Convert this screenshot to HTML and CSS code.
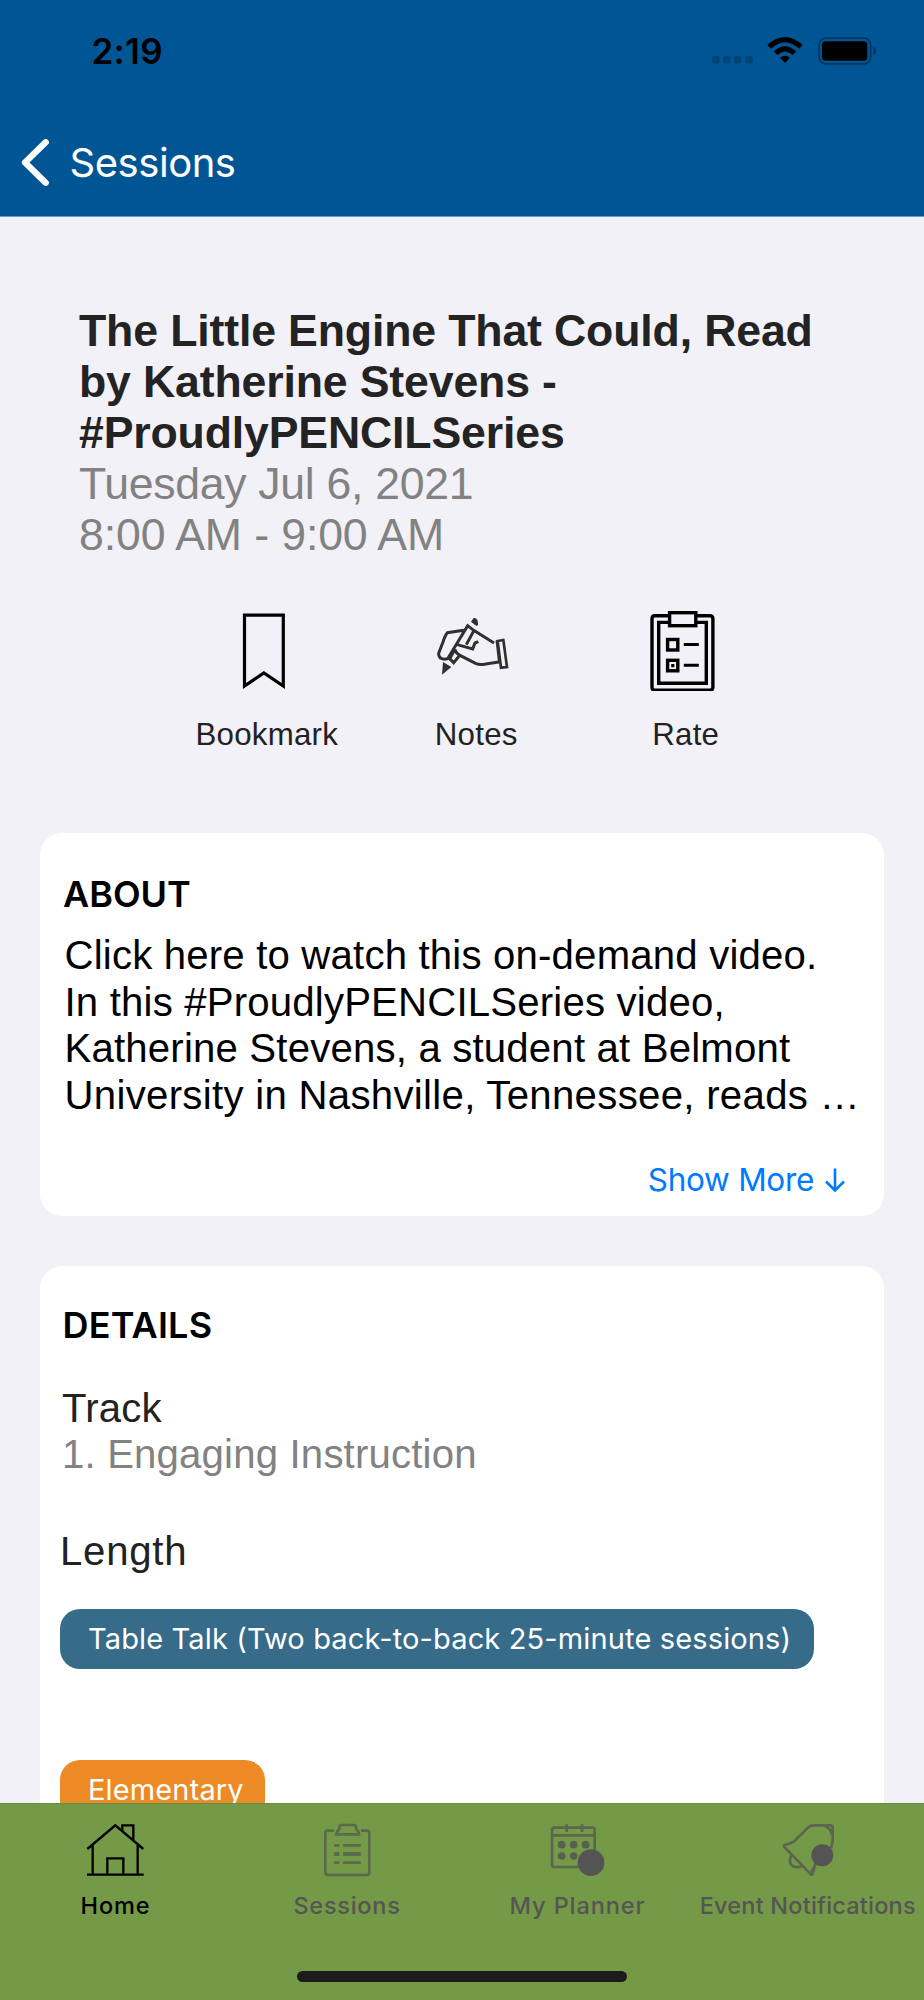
FILE: index.html
```
<!DOCTYPE html>
<html lang="en">
<head>
<meta charset="utf-8">
<title>Session</title>
<link rel="stylesheet" href="styles.css">
</head>
<body>
<div class="screen">
  <header class="header">
    <div class="status">
      <span class="time">2:19</span>
      <div class="status-icons">
        <svg class="cell" width="42" height="8" viewBox="0 0 42 8"><g fill="#004577"><rect x="0" width="7.5" height="7.5" rx="2"/><rect x="11" width="7.5" height="7.5" rx="2"/><rect x="22" width="7.5" height="7.5" rx="2"/><rect x="33.3" width="7.5" height="7.5" rx="2"/></g></svg>
        <svg class="wifi" width="36" height="27" viewBox="0 0 108 81"><path d="M1 24Q54-24 107 24L96 35Q54-4 12 35ZM20 43Q54 12 88 43L77 54Q54 33 31 54ZM39 62Q54 51 69 62L54 78Z"/></svg>
        <svg class="battery" width="59" height="28" viewBox="0 0 177 84"><rect x="3" y="3.500" width="155" height="77" rx="20" fill="none" stroke="#003560" stroke-width="5"/><rect x="12" y="13" width="136" height="58" rx="11"/><path d="M166 29C178 35 178 49 166 55Z" fill="#003560"/></svg>
      </div>
    </div>
    <div class="back">
      <svg width="28" height="47" viewBox="0 0 84 141"><path d="M74 10L12 70.500L74 131" fill="none" stroke="#fff" stroke-width="19" stroke-linecap="round" stroke-linejoin="round"/></svg>
      <span class="back-label">Sessions</span>
    </div>
  </header>
  <main class="content">
    <section class="intro">
      <h1 class="title">The Little Engine That Could, Read<br>by Katherine Stevens -<br>#ProudlyPENCILSeries</h1>
      <p class="when"><span class="date">Tuesday Jul 6, 2021</span><br>8:00 AM - 9:00 AM</p>
    </section>
    <section class="actions">
      <div class="action">
        <svg width="60" height="80" viewBox="0 0 60 80"><path d="M10.500 4.200H49.300V75L29.900 62L10.500 75Z" fill="none" stroke="#000" stroke-width="3.200"/></svg>
        <span class="action-label">Bookmark</span>
      </div>
      <div class="action">
        <svg width="80" height="80" viewBox="68 33 240 240" fill="none" stroke="#303030" stroke-width="9"><path d="M160 91L111 98Q104 106 98 126L85 160Q84 176 103 178L112 176L172 77L190 91L251 129"/><path d="M191 91L168 134M138 133L187 147L194 129L204 125M134 148Q136 160 149 166L197 191Q208 195 222 193L265 186M134 147L118 176L130 188L148 166"/><path d="M262 123L279 120L290 201L272 203Z" stroke-width="8"/><path d="M258 121L266 190" stroke-width="5"/><path d="M182 65L190 54Q204 52 203 75L198 78ZM98 186L123 201L95 224Z" fill="#303030" stroke="none"/></svg>
        <span class="action-label">Notes</span>
      </div>
      <div class="action">
        <svg width="66" height="80" viewBox="0.700 0 66 80" fill="none" stroke="#000" stroke-width="3.400"><path d="M19 4.800H5.500Q2.700 4.800 2.700 7.800V76.300Q2.700 79.300 5.500 79.300H60.500Q63.600 79.300 63.600 76.300V7.800Q63.600 4.800 60.500 4.800H46.500"/><path d="M19 11.400H9.400V72.300H57V11.400H46.500"/><rect x="20.300" y="1.700" width="26.200" height="13"/><rect x="18.300" y="28.500" width="10.200" height="10.500"/><rect x="18.300" y="49.300" width="10.200" height="10.500"/><path d="M34.500 33.500H49.500M34.500 54.200H49.500" stroke-width="3"/><rect x="21.900" y="53" width="3.200" height="3.200" fill="#000" stroke="none"/></svg>
        <span class="action-label">Rate</span>
      </div>
    </section>
    <section class="card about">
      <h2 class="heading">ABOUT</h2>
      <p class="body">Click here to watch this on-demand video.<br>In this #ProudlyPENCILSeries video,<br>Katherine Stevens, a student at Belmont<br><span class="last-line">University in Nashville, Tennessee, reads …</span></p>
      <a class="more">Show More<svg width="20" height="24" viewBox="0 0 20 24"><path d="M10 .5V22M1 13.500L10 22.500L19 13.500" fill="none" stroke="#007aff" stroke-width="2.600"/></svg></a>
    </section>
    <section class="card details">
      <h2 class="heading details-heading">DETAILS</h2>
      <p class="label">Track</p>
      <p class="value">1. Engaging Instruction</p>
      <p class="label length">Length</p>
      <div class="pill blue">Table Talk (Two back-to-back 25-minute sessions)</div>
      <div class="pill orange">Elementary</div>
    </section>
  </main>
  <nav class="tabs">
    <div class="tab active">
      <svg width="60" height="56" viewBox="257 81 180 168" fill="none" stroke="#000" stroke-width="7"><path d="M261 162L345 91L429 162M366 108V91H399V135M277 150V239M412 150V239M260 239H430M321 239V190H369V239"/></svg>
      <span>Home</span>
    </div>
    <div class="tab sessions">
      <svg width="60" height="56" viewBox="952 81 180 168" fill="none" stroke="#5b6a4d" stroke-width="8"><path d="M1003 107H985Q977 107 977 115V232Q977 240 985 240H1101Q1109 240 1109 232V115Q1109 107 1101 107H1084M1010 118Q1012 107 1019 101V96Q1020 90 1026 90H1062Q1068 90 1069 96V101Q1076 107 1078 118ZM1030 151H1083M1030 203H1083M1003 151H1019M1003 203H1019"/><path d="M1030 177H1083M1003 177H1019" stroke-width="12"/></svg>
      <span>Sessions</span>
    </div>
    <div class="tab">
      <svg width="60" height="56" viewBox="258 81 180 168" fill="none" stroke="#5a664e" stroke-width="8"><path d="M350 216H276Q270 216 270 210V105Q270 98 277 98H391Q398 98 398 105V164M270 121H398M314 88V111M360 88V111"/><g fill="#575f50" stroke="none"><circle cx="299" cy="149" r="11.500"/><circle cx="335" cy="149" r="11.500"/><circle cx="371" cy="149" r="11.500"/><circle cx="299" cy="183" r="11.500"/><circle cx="335" cy="183" r="11.500"/><circle cx="387" cy="203" r="40" fill="#545454"/></g></svg>
      <span>My Planner</span>
    </div>
    <div class="tab notifications">
      <svg width="60" height="56" viewBox="947 81 180 168" fill="none" stroke="#5a664e" stroke-width="8"><path d="M962 152Q985 145 995 139L1038 97Q1045 91 1055 91H1103Q1111 91 1111 99V138L1106 160M1062 201L1050 238Q1047 241 1044 237ZM1046 238L962 152M1088 93Q1106 101 1109 119M988 180Q979 195 986 209Q1000 222 1018 213"/><circle cx="1080" cy="181" r="33" fill="#545454" stroke="none"/></svg>
      <span>Event Notifications</span>
    </div>
    <div class="home-indicator"></div>
  </nav>
</div>
</body>
</html>
```
FILE: styles.css
```
* { box-sizing: border-box; }
body, h1, h2, p { margin: 0; font-weight: 400; }
body { background: #f2f1f7; font-family: "Liberation Sans", Arial, sans-serif; }
svg { display: block; flex: none; }

.screen { width: 924px; height: 2000px; display: flex; flex-direction: column; overflow: hidden; background: #f2f1f7; }

.header { flex: none; height: 217px; background: #005695; border-bottom: 1px solid #6a9bc2; font-family: Inter, sans-serif; }
.status { height: 100px; display: flex; align-items: center; justify-content: space-between; padding: 1px 47px 0 91.500px; }
.time { font-size: 35px; line-height: 42px; font-weight: 600; letter-spacing: .3px; }
.status-icons { display: flex; align-items: center; }
.cell { margin-top: 19px; }
.wifi { margin-left: 13px; }
.battery { margin-left: 15px; }
.back { height: 116px; padding: 9px 0 0 21px; display: flex; align-items: center; gap: 20.500px; color: #fff; }
.back-label { font-size: 40px; line-height: 48px; letter-spacing: -.45px; }

.content { flex: none; height: 1586px; overflow: hidden; padding: 89px 40px 0; white-space: nowrap; }
.intro { padding-left: 39px; font-size: 44.64px; line-height: 50.9px; }
.title { font-size: inherit; font-weight: 700; letter-spacing: -.15px; color: #232323; }
.when { letter-spacing: -.12px; color: #828282; }
.date { letter-spacing: -.32px; }

.actions { display: grid; grid-template-columns: repeat(3, 209.5px); margin: 50.500px 0 0 119px; }
.action { display: flex; flex-direction: column; align-items: center; gap: 23.500px; font-size: 31.25px; line-height: 40px; letter-spacing: .25px; color: #222; }
.action-label { padding-left: 6px; }

.card { background: #fff; border-radius: 22px; padding: 0 20px 0 23px; }
.about { margin-top: 78.500px; height: 383px; padding-top: 39px; }
.heading { font: 600 36px/44px Inter, sans-serif; color: #000; }
.body { margin-top: 16.700px; padding-left: 1.500px; font-size: 40.17px; line-height: 46.8px; letter-spacing: .18px; color: #000; }
.last-line { letter-spacing: .3px; }
.more { margin-top: 40.300px; display: flex; justify-content: flex-end; align-items: center; gap: 11px; padding-right: 19px; font: 400 31.500px/40px Inter, sans-serif; letter-spacing: -.3px; color: #007aff; }

.details { margin-top: 50px; height: 700px; padding-top: 37px; padding-left: 20px; display: flex; flex-direction: column; align-items: flex-start; font-size: 40.17px; line-height: 46px; letter-spacing: .17px; }
.details-heading { padding-left: 2.500px; margin-bottom: 39px; letter-spacing: .2px; }
.label { color: #222; padding-left: 2px; }
.value { color: #828282; padding-left: 2px; }
.length { margin-top: 51px; margin-bottom: 34px; padding-left: 0; letter-spacing: .75px; }
.pill { height: 60px; border-radius: 20px; padding: 0 23px 0 28px; display: flex; align-items: center; font: 400 29px/60px Inter, sans-serif; letter-spacing: .14px; color: #fff; }
.blue { background: #366c89; }
.orange { background: #ec8b26; margin-top: 90.500px; padding-right: 21.500px; }

.tabs { flex: none; position: relative; height: 197px; display: grid; grid-template-columns: repeat(4, 231px); align-items: start; background: #749947; border-top: 1px solid #6a8a45; }
.tab { display: flex; flex-direction: column; align-items: center; gap: 13px; padding-top: 18px; font: 500 23.500px/30px Inter, sans-serif; letter-spacing: .9px; color: #555; white-space: nowrap; }
.active { color: #000; }
.sessions { padding-left: 1px; letter-spacing: .75px; }
.notifications { padding-right: 1.500px; letter-spacing: .2px; }
.home-indicator { position: absolute; left: 297px; bottom: 18px; width: 330px; height: 11px; border-radius: 6px; background: #1c1c1c; }
```
